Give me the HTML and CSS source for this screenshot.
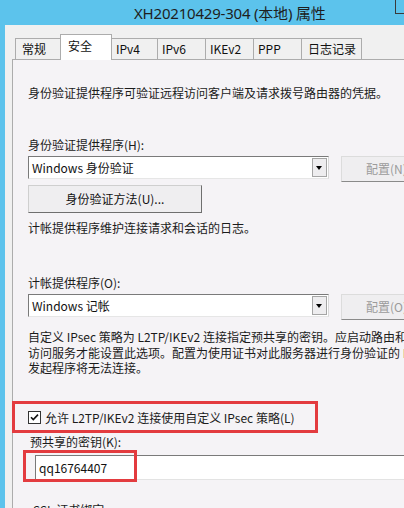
FILE: index.html
```html
<!DOCTYPE html>
<html lang="zh-CN">

<head>
  <meta charset="UTF-8">
  <title>XH20210429-304 (本地) 属性</title>
  <link rel="stylesheet" href="styles.css">
</head>

<body>
  <div class="titlebar">
    <span class="title">XH20210429-304 (本地) 属性</span>
    <span class="win-btn"></span>
  </div>
  <div class="frame">
    <div class="dialog">
      <div class="tabs">
        <div class="tab t1">常规</div>
        <div class="tab t2 active">安全</div>
        <div class="tab t3">IPv4</div>
        <div class="tab t4">IPv6</div>
        <div class="tab t5">IKEv2</div>
        <div class="tab t6">PPP</div>
        <div class="tab t7">日志记录</div>
      </div>
      <div class="panel">
        <p class="intro">身份验证提供程序可验证远程访问客户端及请求拨号路由器的凭据。</p>

        <div class="label label-h">身份验证提供程序(H):</div>
        <div class="combo-row">
          <div class="combo">
            <span class="combo-text">Windows 身份验证</span>
            <span class="combo-arrow"></span>
          </div>
          <div class="btn disabled">配置(N)</div>
        </div>
        <div class="btn method">身份验证方法(U)...</div>

        <p class="note">计帐提供程序维护连接请求和会话的日志。</p>

        <div class="label label-o">计帐提供程序(O):</div>
        <div class="combo-row">
          <div class="combo">
            <span class="combo-text">Windows 记帐</span>
            <span class="combo-arrow"></span>
          </div>
          <div class="btn disabled">配置(O)</div>
        </div>

        <p class="ipsec">自定义 IPsec 策略为 L2TP/IKEv2 连接指定预共享的密钥。应启动路由和远程<br>访问服务才能设置此选项。配置为使用证书对此服务器进行身份验证的 L2TP<br>发起程序将无法连接。</p>

        <div class="check-row">
          <svg class="checkbox" width="13" height="13" viewBox="0 0 13 13">
            <rect x="0.5" y="0.5" width="12" height="12" fill="#fff" stroke="#333"/>
            <path d="M3 6.2 L5.3 8.6 L10 3.6" fill="none" stroke="#111" stroke-width="1.6"/>
          </svg>
          <span>允许 L2TP/IKEv2 连接使用自定义 IPsec 策略(L)</span>
          <div class="mark mark-check"></div>
        </div>

        <div class="label label-k">预共享的密钥(K):</div>
        <div class="textbox">
          <span>qq16764407</span>
          <div class="mark mark-key"></div>
        </div>

        <div class="label label-ssl">SSL 证书绑定</div>
      </div>
    </div>
  </div>
</body>

</html>
```

FILE: styles.css
```css
* {
  margin: 0;
  padding: 0;
  box-sizing: border-box;
}

html,
body {
  width: 404px;
  height: 508px;
  overflow: hidden;
}

body {
  background: #f0f0f0;
  font-family: "Noto Sans", "Noto Sans CJK SC", sans-serif;
  font-size: 12px;
  color: #1b1b1b;
}

.titlebar {
  position: relative;
  height: 25px;
  background: #5cc3ec;
  display: flex;
  align-items: center;
  padding-left: 134px;
}

.title {
  font-size: 15px;
  color: #1e1e1e;
  line-height: 20px;
  letter-spacing: -0.2px;
}

/* bottom-left edge of the window control button */
.win-btn {
  position: absolute;
  left: 395px;
  top: -1px;
  width: 20px;
  height: 15px;
  border: 1px solid #3a3a3a;
}

.frame {
  display: flex;
  height: 483px;
  border-left: 5px solid #5cc3ec;
}

.dialog {
  flex: 1;
  padding: 9px 0 0 7px;
  background: #f0f0f0;
}

.tabs {
  position: relative;
  z-index: 1;
  display: flex;
  align-items: flex-end;
  padding-left: 3px;
  height: 26px;
  margin-bottom: -1px;
}

.tab {
  height: 21px;
  margin-bottom: 1px;
  margin-left: -1px;
  padding-left: 6px;
  line-height: 19px;
  border: 1px solid #acacac;
  border-bottom: none;
  background: #f0f0f0;
  font-family: "Noto Sans CJK SC", sans-serif;
  color: #111;
}

.tab.t1 { width: 46px; margin-left: 0; }
.tab.t2 { width: 52px; }
.tab.t3 { width: 47px; padding-left: 4px; }
.tab.t4 { width: 49px; padding-left: 4px; }
.tab.t5 { width: 49px; padding-left: 4px; }
.tab.t6 { width: 49px; padding-left: 4px; }
.tab.t7 { width: 61px; }

.tab.active {
  height: 26px;
  margin-bottom: 0;
  padding-left: 7px;
  line-height: 22px;
  background: #ffffff;
}

.panel {
  width: 470px;
  height: 460px;
  border: 1px solid #acacac;
  border-right: none;
  background: #f5f3f6;
  padding: 25px 0 0 15px;
  font-family: "Noto Sans CJK SC", sans-serif;
  line-height: 16px;
  white-space: nowrap;
}

.label-h {
  margin-top: 36px;
}

.combo-row {
  display: flex;
  align-items: flex-start;
  gap: 12px;
  margin-top: 3px;
}

.combo {
  display: flex;
  align-items: center;
  justify-content: space-between;
  width: 301px;
  height: 23px;
  background: #fff;
  border: 1px solid;
  border-color: #7a7a7a #d8d8d8 #e6e6e6 #7a7a7a;
  padding-left: 3px;
  padding-right: 1px;
}

.combo-text {
  color: #111;
  line-height: 20px;
}

.combo-arrow {
  position: relative;
  width: 15px;
  height: 19px;
  background: #eeedef;
  border: 1px solid #a5a5a5;
}

.combo-arrow::after {
  content: "";
  position: absolute;
  left: 3px;
  top: 7px;
  border-left: 3.5px solid transparent;
  border-right: 3.5px solid transparent;
  border-top: 4px solid #000;
}

.btn {
  display: flex;
  align-items: center;
  justify-content: center;
  border: 1px solid;
  background: #efeef0;
}

.btn.disabled {
  width: 110px;
  height: 26px;
  justify-content: flex-start;
  padding-left: 24px;
  color: #9b9b9b;
  border-color: #dcdcdc #c8c8c8 #8a8a8a #dcdcdc;
}

.btn.method {
  width: 174px;
  height: 28px;
  margin-top: 3px;
  border-color: #cfcfcf #6f6f6f #6f6f6f #cfcfcf;
  color: #111;
}

.note {
  margin-top: 7px;
}

.label-o {
  margin-top: 39px;
}

.ipsec {
  margin-top: 9px;
  line-height: 15.5px;
}

.check-row {
  position: relative;
  display: flex;
  align-items: center;
  gap: 4px;
  margin-top: 34px;
  height: 16px;
}

.label-k {
  margin-top: 8px;
  margin-left: 2px;
}

.textbox {
  position: relative;
  margin: 5px 0 0 7px;
  width: 420px;
  height: 25px;
  background: #fff;
  border: 1px solid;
  border-color: #7a7a7a #e3e3e3 #e3e3e3 #7a7a7a;
  padding-left: 3px;
  line-height: 23px;
  color: #111;
}

.label-ssl {
  margin-top: 22px;
  margin-left: 5px;
}

/* red annotation frames drawn over the dialog */
.mark {
  position: absolute;
  border: 3px solid #e33b3f;
}

.mark-check {
  left: -16px;
  top: -9px;
  width: 306px;
  height: 32px;
}

.mark-key {
  left: -13px;
  top: -6px;
  width: 114px;
  height: 32px;
}
```
